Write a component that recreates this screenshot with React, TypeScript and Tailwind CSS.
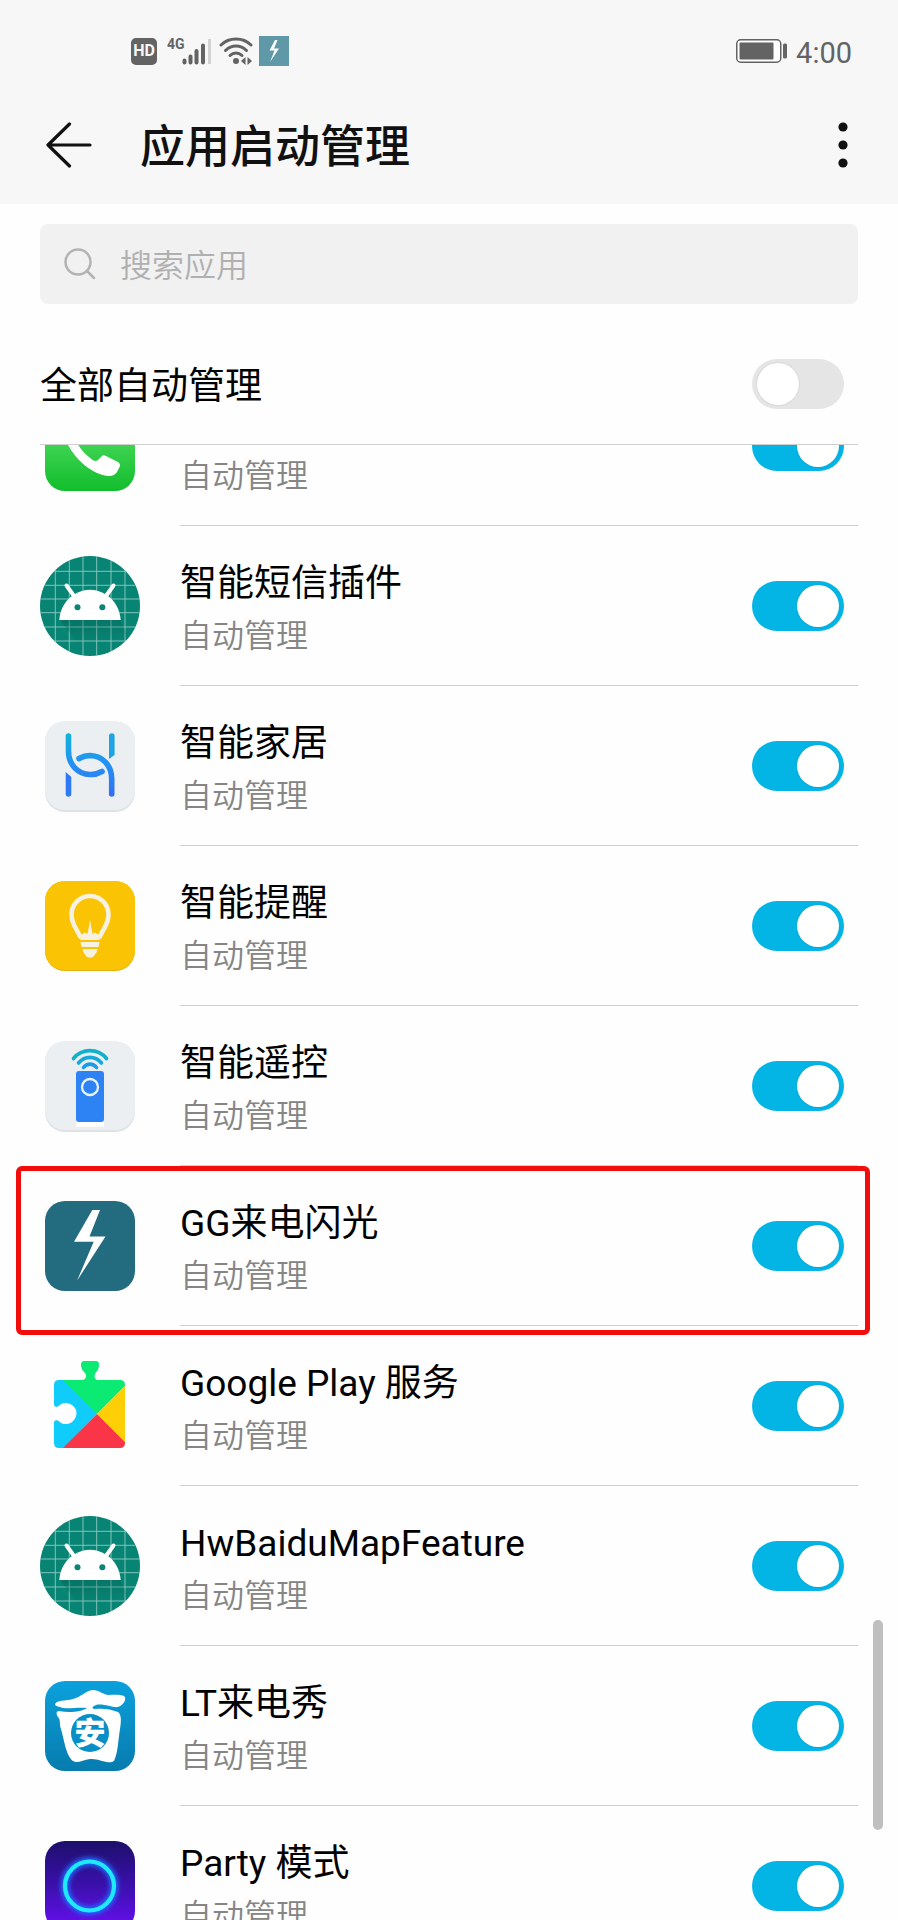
import React, { useState } from 'react';

type AppItem = {
  name?: string;
  icon: React.FC;
  highlighted?: boolean;
};

const PhoneIcon: React.FC = () => (
  <svg viewBox="0 0 90 90" className="w-[90px] h-[90px]" aria-hidden="true">
    <defs>
      <linearGradient id="phone-bg" x1="0" y1="0" x2="0" y2="1">
        <stop offset="0" stopColor="#66e875" />
        <stop offset="1" stopColor="#12bd2c" />
      </linearGradient>
    </defs>
    <rect width="90" height="90" rx="20" fill="url(#phone-bg)" />
    <path
      d="M22 42C30 58 46 73 63 75C67 75.500 70 74 72 71L74.500 66C75.500 64 75 62.500 73 61L61 55C59 54 57.500 54 56 56L53 59C51 60.500 49 60 47 58.500C41 54 36 49 32 42C31 40 31 38 33 36L36 33C37.500 31 37 30 36 28L30 17C28.500 15 27 15 25 16L20 19C17 21 15.500 24 16 28C17 33 19 37 22 42Z"
      fill="#fff"
    />
  </svg>
);

const gridLines = [15.3, 29.3, 43, 56.7, 71, 85];

const AndroidIcon: React.FC = () => (
  <svg viewBox="0 0 100 100" className="w-[100px] h-[100px]" aria-hidden="true">
    <defs>
      <clipPath id="android-circle">
        <circle cx="50" cy="50" r="50" />
      </clipPath>
      <linearGradient id="android-shadow" x1="0" y1="0" x2="0.300" y2="1">
        <stop offset="0" stopColor="#00594d" stopOpacity="0.400" />
        <stop offset="1" stopColor="#00594d" stopOpacity="0" />
      </linearGradient>
    </defs>
    <g clipPath="url(#android-circle)">
      <rect width="100" height="100" fill="#078474" />
      {gridLines.map((p) => (
        <path key={p} d={`M${p} 0V100M0 ${p}H100`} stroke="#8fcbc3" strokeWidth="0.9" />
      ))}
      <path d="M20 64H80L92 88H38Z" fill="url(#android-shadow)" />
    </g>
    <path d="M19.300 64C20 53 25.500 44 34 38.500C44 32 56 32 66 38.500C74.500 44 80 53 80.700 64Z" fill="#fff" />
    <path d="M26.500 29.500L34 40M73.500 29.500L66 40" stroke="#fff" strokeWidth="4" strokeLinecap="round" />
    <circle cx="37.500" cy="51.300" r="3" fill="#078474" />
    <circle cx="62.300" cy="51.300" r="3" fill="#078474" />
  </svg>
);

const SmartHomeIcon: React.FC = () => (
  <svg viewBox="0 0 90 92" className="w-[90px] h-[92px]" aria-hidden="true">
    <defs>
      <linearGradient id="home-line" gradientUnits="userSpaceOnUse" x1="0" y1="14" x2="0" y2="75">
        <stop offset="0" stopColor="#12b4d8" />
        <stop offset="0.500" stopColor="#2490f3" />
        <stop offset="1" stopColor="#3370f2" />
      </linearGradient>
    </defs>
    <rect y="2" width="90" height="90" rx="20" fill="#dfe2e3" />
    <rect y="1" width="90" height="89" rx="20" fill="#ebeff1" />
    <g fill="none" stroke="url(#home-line)" strokeWidth="5.600" strokeLinecap="round">
      <path d="M23.500 16V31C23.500 45 33 54 45 54.500C49.500 54.700 53.500 53.500 57 51.500" />
      <path d="M34 38.500C37.500 36.500 41 35.500 45.500 35.500C57 36 66.700 45 66.700 59V74" />
    </g>
    <path d="M64 16a2.800 2.800 0 0 1 5.600 0V35L64 39Z" fill="#1fa3e4" />
    <path d="M20.700 52L26.300 57V74a2.800 2.800 0 0 1-5.600 0Z" fill="#2f7af3" />
  </svg>
);

const ReminderIcon: React.FC = () => (
  <svg viewBox="0 0 90 90" className="w-[90px] h-[90px]" aria-hidden="true">
    <rect width="90" height="90" rx="20" fill="#e3b50c" />
    <rect width="90" height="89" rx="20" fill="#fac405" />
    <path
      d="M36 57L29 44C27 40 26.500 37 26.500 33.500A18.500 18.500 0 0 1 63.500 33.500C63.500 37 63 40 61 44L54 57"
      fill="none"
      stroke="#f7f1e1"
      strokeWidth="4.600"
    />
    <path d="M35 59L37 53.500L40 51.500L42.500 53L45 39L47.500 53L50 51.500L53 53.500L55 59Z" fill="#f7f1e1" />
    <path d="M35.500 61H54.500L53.500 66H36.500ZM37.500 68H52.500C52 72 50 73 48.500 75.500C47 77 43 77 41.500 75.500C40 73 38 72 37.500 68Z" fill="#f7f1e1" />
  </svg>
);

const RemoteIcon: React.FC = () => (
  <svg viewBox="0 0 90 92" className="w-[90px] h-[92px]" aria-hidden="true">
    <rect y="2" width="90" height="90" rx="20" fill="#dfe2e3" />
    <rect y="1" width="90" height="89" rx="20" fill="#ebeff1" />
    <path d="M31 82H59V87H31Z" fill="#fff" />
    <rect x="31" y="31" width="28" height="51" rx="3" fill="#2d83f4" />
    <circle cx="45" cy="47" r="8" fill="none" stroke="#e9f3ff" strokeWidth="2.300" />
    <g fill="none" strokeWidth="3.600" strokeLinecap="round">
      <path d="M28.500 18.500C37 8 53 8 61.500 18.500" stroke="#12b1cb" />
      <path d="M33.500 23C40 15.500 50 15.500 56.500 23" stroke="#16a8d8" />
      <path d="M38.500 27.500C42 23 48 23 51.500 27.500" stroke="#1e9be6" />
    </g>
  </svg>
);

const FlashIcon: React.FC = () => (
  <svg viewBox="0 0 90 90" className="w-[90px] h-[90px]" aria-hidden="true">
    <rect width="90" height="90" rx="20" fill="#236b7e" />
    <path d="M47.300 9H55L44.500 35.500H60.500L32 79.700L48.700 40.700H29Z" fill="#fff" />
  </svg>
);

const PlayServicesIcon: React.FC = () => (
  <svg viewBox="0 0 90 90" className="w-[90px] h-[90px]" aria-hidden="true">
    <defs>
      <clipPath id="play-shape">
        <path d="M14 19H38C41 18 42 15 40 12C37 9 36 7 36 4C36 1 37 0 39 0H51C53 0 54 1 54 4C54 7 53 9 50.500 12C49 15 49.500 18 52 19H75Q80 19 80 24V82Q80 87 75 87H14Q9 87 9 82V62C9 59 11 59 13 59.500C17 64 23 64 27 61C33 56 33 48 27 44C23 41 17 41 13 45.500C11 46 9 46 9 43V24Q9 19 14 19Z" />
      </clipPath>
    </defs>
    <g clipPath="url(#play-shape)">
      <path d="M0 0H19L52 53L18 88H0Z" fill="#0fccfb" />
      <path d="M0 -1H90V15L52 53L18 19V0Z" fill="#0bea73" />
      <path d="M90 15V91L52 53Z" fill="#fdcf04" />
      <path d="M17 88L52 53L87 88Z" fill="#fb3548" />
    </g>
  </svg>
);

const CallShowIcon: React.FC = () => (
  <svg viewBox="0 0 90 90" className="w-[90px] h-[90px]" aria-hidden="true">
    <defs>
      <linearGradient id="show-bg" x1="0" y1="0" x2="0" y2="1">
        <stop offset="0" stopColor="#0ba1dc" />
        <stop offset="1" stopColor="#077bae" />
      </linearGradient>
    </defs>
    <rect width="90" height="90" rx="20" fill="url(#show-bg)" />
    <path
      d="M10 23C12 19 20 20 28 18C36 16 40 10 48 9C54 9 57 13 63 14C70 14 77 13 80 16C81 20 78 24 73 26C68 27 58 22 51 24C48 25 46 27 49 28C57 27 66 28 73 31C77 34 76 42 75 48C73 60 73 72 69 80C63 84 54 77 45 78C38 79 32 83 28 80C21 75 19 58 16 48C14 43 16 39 13 36C11 33 11 30 14 30C24 32 36 31 42 27C30 26 22 29 15 26C12 25 10 25 10 23Z"
      fill="#fff"
    />
    <circle cx="45" cy="52" r="19" fill="#0a8ec6" />
    <text
      x="45"
      y="63"
      textAnchor="middle"
      fill="#fff"
      className="text-[31px] font-black font-['Noto_Sans_CJK_SC',sans-serif]"
    >
      安
    </text>
  </svg>
);

const PartyIcon: React.FC = () => (
  <svg viewBox="0 0 90 90" className="w-[90px] h-[90px]" aria-hidden="true">
    <defs>
      <linearGradient id="party-bg" x1="0" y1="0" x2="0" y2="1">
        <stop offset="0" stopColor="#1d0f6b" />
        <stop offset="0.500" stopColor="#3b10ad" />
        <stop offset="1" stopColor="#6b0ff5" />
      </linearGradient>
      <filter id="party-glow" x="-30%" y="-30%" width="160%" height="160%">
        <feGaussianBlur stdDeviation="2.500" />
      </filter>
    </defs>
    <rect width="90" height="90" rx="20" fill="url(#party-bg)" />
    <circle cx="44.500" cy="45" r="24.500" fill="none" stroke="#1b6fff" strokeWidth="8" filter="url(#party-glow)" />
    <circle cx="44.500" cy="45" r="24.500" fill="none" stroke="#1fe9fd" strokeWidth="4.200" />
  </svg>
);

const apps: AppItem[] = [
  { icon: PhoneIcon },
  { name: '智能短信插件', icon: AndroidIcon },
  { name: '智能家居', icon: SmartHomeIcon },
  { name: '智能提醒', icon: ReminderIcon },
  { name: '智能遥控', icon: RemoteIcon },
  { name: 'GG来电闪光', icon: FlashIcon, highlighted: true },
  { name: 'Google Play 服务', icon: PlayServicesIcon },
  { name: 'HwBaiduMapFeature', icon: AndroidIcon },
  { name: 'LT来电秀', icon: CallShowIcon },
  { name: 'Party 模式', icon: PartyIcon },
];

const Toggle: React.FC<{ id: string; initial: boolean }> = ({ id, initial }) => {
  const [on, setOn] = useState(initial);

  return (
    <input
      id={id}
      type="checkbox"
      role="switch"
      checked={on}
      onChange={() => setOn(!on)}
      className="appearance-none shrink-0 flex items-center w-[92px] h-[50px] px-[5px] mr-[14px] rounded-full bg-[#e5e5e5] checked:bg-[#02b5e5] cursor-pointer transition-colors before:content-[''] before:w-[42px] before:h-[42px] before:rounded-full before:bg-white before:shadow-[0_0_2px_rgba(0,0,0,0.15)] checked:before:translate-x-10"
    />
  );
};

const StatusBar: React.FC = () => (
  <div className="flex items-center justify-between h-[102px] pl-[131px] pr-[46px] text-[#636363]">
    <div className="flex items-center">
      <span className="flex items-center justify-center w-[26px] h-[27px] rounded-[5px] bg-[#636363] text-[#f7f7f7] text-[16px] font-bold">
        HD
      </span>
      <span className="ml-[10px] mb-[14px] text-[14px] leading-[14px] font-bold">4G</span>
      <svg viewBox="0 0 30 28" className="w-[30px] h-[28px] -ml-[4px]" aria-hidden="true">
        <path d="M3.500 23.500V25.500M9.500 19.500V25.500M15.500 14V25.500M22 8.500V25.500" stroke="#636363" strokeWidth="4" strokeLinecap="round" />
        <path d="M28.500 2V27" stroke="#d2d2d2" strokeWidth="3" />
      </svg>
      <svg viewBox="0 0 34 28" className="w-[34px] h-[28px] ml-2" aria-hidden="true">
        <g fill="none" stroke="#636363" strokeWidth="3" strokeLinecap="round">
          <path d="M2 8C10 0 24 0 32 8" />
          <path d="M6.500 13.500C12.500 7.500 21.500 7.500 27.500 13.500" />
          <path d="M11 18.500C14.500 15 19.500 15 23 18.500" />
        </g>
        <circle cx="17" cy="24" r="3" fill="#636363" />
        <path d="M26.500 20V28L22 24ZM28.500 20V28L33 24Z" fill="#636363" />
      </svg>
      <svg viewBox="0 0 30 30" className="w-[30px] h-[30px] ml-[6px]" aria-hidden="true">
        <rect width="30" height="30" fill="#5f98a6" />
        <path d="M16 4H18.500L15 12.500H20L11 26L15.500 14.500H10.500Z" fill="#fff" />
      </svg>
    </div>
    <div className="flex items-center gap-[9px]">
      <svg viewBox="0 0 51 24" className="w-[51px] h-[24px]" aria-hidden="true">
        <rect x="0.750" y="0.750" width="44" height="22.500" rx="4" fill="#fff" stroke="#636363" strokeWidth="1.500" />
        <rect x="3.500" y="3.500" width="34" height="17" rx="1" fill="#636363" />
        <rect x="47" y="4.500" width="4" height="15" rx="1.500" fill="#636363" />
      </svg>
      <span className="pt-[3px] text-[29px] leading-8">4:00</span>
    </div>
  </div>
);

const AppRow: React.FC<{ app: AppItem; index: number }> = ({ app, index }) => {
  const Icon = app.icon;
  const id = `app-${index}`;

  return (
    <li className="relative flex items-stretch gap-10 px-10 h-[160px] shrink-0">
      <div className="flex items-center justify-center w-[100px] shrink-0">
        <Icon />
      </div>
      <div className="flex flex-1 min-w-0 items-center justify-between border-b border-[#cfcfcf]">
        <label htmlFor={id} className="flex flex-col min-w-0 pt-1 cursor-pointer">
          <span className="h-[56px] text-[37px] leading-[56px] text-black truncate">{app.name}</span>
          <span className="text-[32px] leading-[48px] text-[#858585] font-[350]">自动管理</span>
        </label>
        <Toggle id={id} initial />
      </div>
      {app.highlighted && (
        <div className="absolute top-0 -bottom-[9px] left-4 right-7 z-10 border-5 border-[#f20d0d] rounded-[6px] pointer-events-none" />
      )}
    </li>
  );
};

const App: React.FC = () => {
  return (
    <div className="relative flex flex-col h-screen overflow-hidden bg-[#fefefe] text-black font-[Roboto,'Noto_Sans_CJK_SC',sans-serif]">
      <header className="bg-[#f7f7f7] pb-4">
        <StatusBar />
        <div className="flex items-center h-[86px] pl-[46px] pr-10">
          <button type="button" aria-label="返回" className="cursor-pointer">
            <svg viewBox="0 0 46 46" className="w-[46px] h-[46px]" fill="none" stroke="#111" strokeWidth="3.200" strokeLinecap="round" strokeLinejoin="round">
              <path d="M23.500 2L2 23L23.500 44M2 23H44" />
            </svg>
          </button>
          <h1 className="flex-1 ml-12 pt-[6px] text-[45px] leading-[64px] font-medium text-[#111]">应用启动管理</h1>
          <button type="button" aria-label="更多" className="cursor-pointer">
            <svg viewBox="0 0 30 46" className="w-[30px] h-[46px]" fill="#111">
              <circle cx="15" cy="5" r="4.600" />
              <circle cx="15" cy="23" r="4.600" />
              <circle cx="15" cy="41" r="4.600" />
            </svg>
          </button>
        </div>
      </header>

      {/* Busca */}
      <label className="flex items-center gap-6 h-20 mx-10 mt-5 px-6 shrink-0 rounded-lg bg-[#f1f1f1]">
        <svg viewBox="0 0 32 32" className="w-8 h-8 shrink-0" fill="none" stroke="#b3b3b3" strokeWidth="2.500" strokeLinecap="round" aria-hidden="true">
          <circle cx="14" cy="14" r="12.500" />
          <path d="M23 23L30 30" />
        </svg>
        <input
          type="text"
          aria-label="搜索应用"
          placeholder="搜索应用"
          className="flex-1 min-w-0 pt-[3px] bg-transparent outline-none text-[32px] font-[350] placeholder:text-[#b0b0b0]"
        />
      </label>

      <div className="flex items-center justify-between h-[120px] mt-5 mx-10 shrink-0 border-b border-[#cfcfcf] box-content">
        <label htmlFor="auto-all" className="pt-[6px] text-[37px] leading-[56px] cursor-pointer">
          全部自动管理
        </label>
        <Toggle id="auto-all" initial={false} />
      </div>

      {/* A lista já rolada: a primeira linha fica cortada no topo */}
      <main className="flex-1 min-h-0 overflow-hidden">
        <ul className="flex flex-col -mt-[79px]">
          {apps.map((app, index) => (
            <AppRow key={index} app={app} index={index} />
          ))}
        </ul>
      </main>

      <div className="absolute right-[15px] bottom-[90px] w-[10px] h-[210px] rounded-full bg-[#bfbfbf]" />
    </div>
  );
};

export default App;
